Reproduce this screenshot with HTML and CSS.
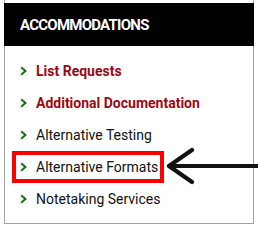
FILE: index.html
```html
<!DOCTYPE html>
<html lang="en">
<head>
  <meta charset="UTF-8">
  <meta name="viewport" content="width=device-width, initial-scale=1.0">
  <title>Accommodations</title>
  <link rel="stylesheet" href="styles.css">
</head>
<body>
<div class="sidebar">
    <div class="sidebar-header">ACCOMMODATIONS</div>
    <ul class="menu">
        <li><a class="menu-link strong" href="#"><span class="chev"><svg width="7" height="10" viewBox="0 0 7 10"><path d="M1.2 1.2 L5.4 5 L1.2 8.8" fill="none" stroke="currentColor" stroke-width="2.1"/></svg></span>List Requests</a></li>
        <li><a class="menu-link strong" href="#"><span class="chev"><svg width="7" height="10" viewBox="0 0 7 10"><path d="M1.2 1.2 L5.4 5 L1.2 8.8" fill="none" stroke="currentColor" stroke-width="2.1"/></svg></span>Additional Documentation</a></li>
        <li><a class="menu-link" href="#"><span class="chev"><svg width="7" height="10" viewBox="0 0 7 10"><path d="M1.2 1.2 L5.4 5 L1.2 8.8" fill="none" stroke="currentColor" stroke-width="2.1"/></svg></span>Alternative Testing</a></li>
        <li><a class="menu-link marked" href="#"><span class="chev"><svg width="7" height="10" viewBox="0 0 7 10"><path d="M1.2 1.2 L5.4 5 L1.2 8.8" fill="none" stroke="currentColor" stroke-width="2.1"/></svg></span>Alternative Formats</a></li>
        <li><a class="menu-link" href="#"><span class="chev"><svg width="7" height="10" viewBox="0 0 7 10"><path d="M1.2 1.2 L5.4 5 L1.2 8.8" fill="none" stroke="currentColor" stroke-width="2.1"/></svg></span>Notetaking Services</a></li>
    </ul>
</div>
<svg class="pointer" width="94" height="40" viewBox="0 0 94 40">
    <path d="M28 4 L5 20 L28 36 M6 20 L94 20" fill="none" stroke="#111" stroke-width="4.2" stroke-linecap="round" stroke-linejoin="round"/>
</svg>
</body>
</html>
```

FILE: styles.css
```css
body {
    margin: 0;
    padding: 0 0 0 4px;
    background-color: #fff;
    font-family: Roboto, Arial, sans-serif;
    position: relative;
}
.sidebar {
    width: 250px;
    box-sizing: border-box;
    border: 1px solid #a3a3a3;
    border-top: none;
    padding-top: 3px;
    height: 224px;
}
.sidebar-header {
    background-color: #000;
    color: #fff;
    height: 43px;
    margin: 0 -1px;
    padding-left: 16px;
    display: flex;
    align-items: center;
    font-size: 15px;
    font-weight: bold;
    letter-spacing: -0.75px;
}
.menu {
    list-style: none;
    margin: 0;
    padding: 9px 0 0 0;
}
.menu li {
    height: 32px;
}
.menu-link {
    display: inline-flex;
    align-items: center;
    box-sizing: border-box;
    height: 32px;
    margin-left: 7px;
    padding: 0 2px 0 4px;
    border: 4px solid transparent;
    color: #111;
    font-size: 14px;
    text-decoration: none;
}
.menu-link.strong {
    color: #9a0a12;
    font-weight: bold;
}
.menu-link.marked {
    border-color: #f00;
}
.chev {
    color: #1f6f1f;
    width: 16px;
    display: flex;
    align-items: center;
}
.pointer {
    position: absolute;
    left: 164px;
    top: 146px;
}
```
